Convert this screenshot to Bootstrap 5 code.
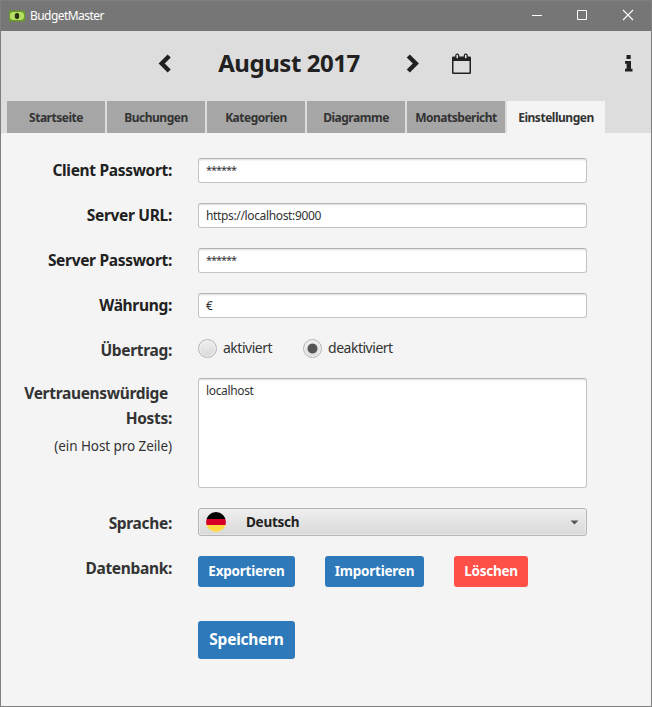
<!DOCTYPE html>
<html lang="de">
<head>
<meta charset="utf-8">
<meta name="viewport" content="width=device-width, initial-scale=1">
<title>BudgetMaster</title>
<link href="https://cdn.jsdelivr.net/npm/bootstrap@5.3.0/dist/css/bootstrap.min.css" rel="stylesheet">
<style>
  body { font-family: "Noto Sans", "Open Sans", sans-serif; color: #333; background: #f4f4f4; }
  .app-window { width: 652px; height: 707px; border: 1px solid #7f7f7f; background: #f4f4f4; overflow: hidden; }
  .title-bar { height: 30px; background: #767676; color: #fff; padding-left: 8px; }
  .title-text { font-size: 12px; letter-spacing: -.55px; margin-left: 5px; }
  .win-btn { width: 46px; height: 30px; }
  .win-btns { margin-right: -1px; }
  .month-bar { height: 70px; background: #ddd; color: #212121; padding-bottom: 5px; }
  .month-prev { margin-left: 157px; }
  .month-name { width: 194px; margin: 0 20px; font-size: 24px; font-weight: 700; line-height: 24px; padding-bottom: 1px; letter-spacing: -.45px; }
  .month-cal { margin-left: 31px; }
  .month-info { margin-right: 18px; }
  .tab-strip { height: 32px; background: #ddd; padding-left: 6px; gap: 2px; }
  .tab-strip .nav-link { width: 98px; height: 32px; padding: 2px 0 0; border-radius: 0; background: #a6a6a6; color: #333; font-size: 12px; line-height: 30px; font-weight: 700; text-align: center; white-space: nowrap; letter-spacing: -.48px; }
  .tab-strip .nav-link.active { background: #f4f4f4; color: #333; }
  .settings { padding-top: 25px; gap: 20px; }
  .setting { gap: 25px; }
  .setting-label { width: 172px; padding-right: 1px; text-align: right; font-size: 15.5px; font-weight: 700; line-height: 25px; white-space: nowrap; letter-spacing: -.32px; flex: none; }
  .strong-label { color: #212121; }
  .setting-field { width: 389px; flex: none; }
  .field-box { border: 1px solid #c4c4c4; border-top-color: #b4b4b4; border-radius: 3px; background: #fff; box-shadow: inset 0 2px 2px -1px #ddd; color: #333; font-size: 12px; line-height: 17px; padding: 3px 7px; height: 25px; letter-spacing: -.35px; resize: none; }
  .field-box:focus { box-shadow: inset 0 2px 2px -1px #ddd; border-color: #b4b4b4; }
  .stars { font-size: 11px; letter-spacing: -1.05px; padding: 2px 7px 4px; }
  textarea.field-box { height: 110px; display: block; }
  .radio-row { height: 20px; font-size: 14px; line-height: 20px; letter-spacing: -.48px; }
  .radio-choice { width: 105px; }
  .radio-row .form-check-input { width: 19px; height: 19px; margin: 0 6px 0 0; border: 1px solid #b5b5b5; background: linear-gradient(#efefef, #d9d9d9); box-shadow: inset 0 0 0 1px #f1f1f1; }
  .radio-row .form-check-input:checked { background: radial-gradient(circle, #555 0 4.5px, transparent 5.4px), linear-gradient(#efefef, #d9d9d9); }
  .hosts-label { padding-top: 3px; }
  .hint { font-size: 13.5px; font-weight: 400; line-height: 20px; margin-top: 5px; letter-spacing: -.08px; }
  .lang-row { height: 28px; }
  .lang-row .setting-label { padding-top: 2px; }
  .lang-box { height: 28px; border: 1px solid #b4b4b4; border-radius: 3px; background: linear-gradient(#efefef, #d9d9d9); box-shadow: inset 0 0 0 1px #f0f0f0aa; padding: 0 7px; font-size: 13.5px; font-weight: 700; color: #212121; letter-spacing: -.28px; }
  .lang-name { margin-left: 20px; }
  .btn-flat { height: 31px; padding: 0; border: 0; border-radius: 3px; color: #fff; background: #2e79b9; font-size: 13.5px; font-weight: 700; line-height: 31px; letter-spacing: -.24px; }
  .btn-flat:hover { color: #fff; background: #296da7; }
  .btn-red { background: #ff5047; }
  .btn-red:hover { background: #e6483f; }
  .btn-gap { gap: 30px; }
  .w-exp { width: 97px; } .w-imp { width: 99px; } .w-del { width: 74px; }
  .save-row { margin-top: 14px; }
  .btn-save { width: 97px; height: 38px; font-size: 15.5px; line-height: 36px; padding-bottom: 2px; }
</style>
<script src="https://cdn.jsdelivr.net/npm/bootstrap@5.3.0/dist/js/bootstrap.bundle.min.js"></script>
</head>
<body>
<div class="app-window d-flex flex-column">
  <header class="title-bar d-flex align-items-center">
    <svg width="16" height="12" viewBox="0 0 16 12"><rect y=".5" width="16" height="11" fill="#699b2c"/><path d="M3 2h10l2 2v4l-2 2H3L1 8V4z" fill="#b5dd62"/><ellipse cx="8" cy="6" rx="2.200" ry="3" fill="#1d2b10"/><path d="M7.200 4.500l.8-.5v4" fill="none" stroke="#3d5222" stroke-width=".5"/></svg>
    <span class="title-text">BudgetMaster</span>
    <div class="win-btns d-flex ms-auto">
      <span class="win-btn d-flex"><svg width="46" height="30" fill="none" stroke="#fff"><path d="M18 14.500h10"/></svg></span>
      <span class="win-btn d-flex"><svg width="46" height="30" fill="none" stroke="#fff"><path d="M17.500 9.500h9v9h-9z"/></svg></span>
      <span class="win-btn d-flex"><svg width="46" height="30" fill="none" stroke="#fff" stroke-width="1.1"><path d="M17 9l10 10M27 9l-10 10"/></svg></span>
    </div>
  </header>

  <div class="month-bar d-flex align-items-center">
    <svg class="month-prev flex-shrink-0" width="14" height="19" viewBox="0 0 14 19" fill="none" stroke="#212121" stroke-width="4.400"><path d="M11.200 2L3.700 9.500l7.500 7.500"/></svg>
    <span class="month-name text-center">August 2017</span>
    <svg class="flex-shrink-0" width="14" height="19" viewBox="0 0 14 19" fill="none" stroke="#212121" stroke-width="4.400"><path d="M2.300 2l7.500 7.500L2.300 17"/></svg>
    <svg class="month-cal flex-shrink-0" width="20" height="21" viewBox="0 0 20 21"><path d="M2.200 3.500h16.600q1.200 0 1.200 1.200v15.100q0 1.200-1.200 1.200H2.200Q1 21 1 19.800V4.700q0-1.200 1.200-1.200zM2.500 8v11.500h16V8z" fill="#212121" fill-rule="evenodd"/><rect x="4.800" y="1.200" width="2.900" height="4.800" rx="1.400" fill="#ddd" stroke="#212121" stroke-width="1.200"/><rect x="13.300" y="1.200" width="2.900" height="4.800" rx="1.400" fill="#ddd" stroke="#212121" stroke-width="1.200"/></svg>
    <svg class="month-info ms-auto flex-shrink-0" width="8" height="17" viewBox="0 0 8 17" fill="#212121"><path d="M1.500 0h4.200v4H1.500zM0 6h6v7.800h1.500V16.500H0v-2.700h1.600V8.700H0z"/></svg>
  </div>

  <nav class="tab-strip nav flex-nowrap">
    <a class="nav-link" href="#">Startseite</a>
    <a class="nav-link" href="#">Buchungen</a>
    <a class="nav-link" href="#">Kategorien</a>
    <a class="nav-link" href="#">Diagramme</a>
    <a class="nav-link" href="#">Monatsbericht</a>
    <a class="nav-link active" href="#">Einstellungen</a>
  </nav>

  <form class="settings d-flex flex-column">
    <div class="setting d-flex align-items-center">
      <label class="setting-label strong-label" for="clientPw">Client Passwort:</label>
      <div class="setting-field"><input id="clientPw" class="form-control field-box stars" value="******"></div>
    </div>
    <div class="setting d-flex align-items-center">
      <label class="setting-label strong-label" for="serverUrl">Server URL:</label>
      <div class="setting-field"><input id="serverUrl" class="form-control field-box" value="https://localhost:9000"></div>
    </div>
    <div class="setting d-flex align-items-center">
      <label class="setting-label strong-label" for="serverPw">Server Passwort:</label>
      <div class="setting-field"><input id="serverPw" class="form-control field-box stars" value="******"></div>
    </div>
    <div class="setting d-flex align-items-center">
      <label class="setting-label strong-label" for="currency">Währung:</label>
      <div class="setting-field"><input id="currency" class="form-control field-box" value="€"></div>
    </div>
    <div class="setting radio-row d-flex align-items-center">
      <span class="setting-label pt-1">Übertrag:</span>
      <div class="setting-field d-flex">
        <label class="radio-choice d-flex align-items-center"><input class="form-check-input" type="radio" name="carry">aktiviert</label>
        <label class="d-flex align-items-center"><input class="form-check-input" type="radio" name="carry" checked>deaktiviert</label>
      </div>
    </div>
    <div class="setting d-flex">
      <div class="setting-label hosts-label"><span class="pe-1">Vertrauenswürdige</span><br>Hosts:<div class="hint">(ein Host pro Zeile)</div></div>
      <div class="setting-field"><textarea class="form-control field-box">localhost</textarea></div>
    </div>
    <div class="setting lang-row d-flex align-items-center">
      <span class="setting-label">Sprache:</span>
      <div class="setting-field lang-box d-flex align-items-center">
        <svg width="20" height="20" viewBox="0 0 20 20"><clipPath id="disc"><circle cx="10" cy="10" r="10"/></clipPath><g clip-path="url(#disc)"><path d="M0 0h20v7H0z"/><path d="M0 7h20v6H0z" fill="#d80027"/><path d="M0 13h20v7H0z" fill="#ffda44"/></g></svg>
        <span class="lang-name">Deutsch</span>
        <svg class="ms-auto" width="9" height="5"><path d="M.5.500h8L4.500 4.500z" fill="#555"/></svg>
      </div>
    </div>
    <div class="setting d-flex align-items-start">
      <span class="setting-label">Datenbank:</span>
      <div class="setting-field btn-gap d-flex">
        <button type="button" class="btn btn-flat w-exp">Exportieren</button>
        <button type="button" class="btn btn-flat w-imp">Importieren</button>
        <button type="button" class="btn btn-flat btn-red w-del">Löschen</button>
      </div>
    </div>
    <div class="setting save-row d-flex">
      <span class="setting-label"></span>
      <button type="button" class="btn btn-flat btn-save">Speichern</button>
    </div>
  </form>
</div>
</body>
</html>
